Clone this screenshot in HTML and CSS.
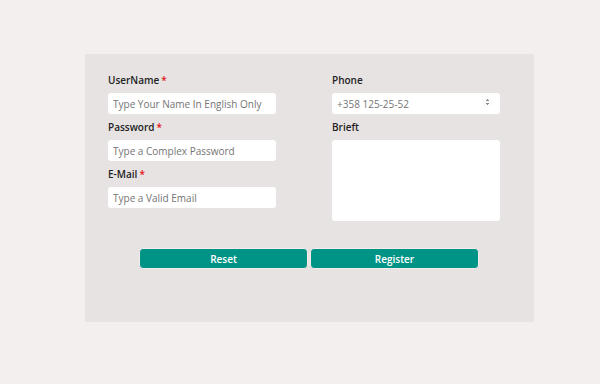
FILE: index.html
```html
<!DOCTYPE html>
<html lang="en">
<head>
    <meta charset="UTF-8">
    <meta name="viewport" content="width=device-width, initial-scale=1.0">
    <title>Register</title>
    <link rel="stylesheet" href="styles.css">
</head>
<body>

    <form class="register-panel" onsubmit="return false">
        <div class="form-grid">
            <div class="form-col">
                <div class="field">
                    <label for="username">UserName<span class="required">*</span></label>
                    <input type="text" id="username" placeholder="Type Your Name In English Only">
                </div>
                <div class="field">
                    <label for="password">Password<span class="required">*</span></label>
                    <input type="password" id="password" placeholder="Type a Complex Password">
                </div>
                <div class="field">
                    <label for="email">E-Mail<span class="required">*</span></label>
                    <input type="email" id="email" placeholder="Type a Valid Email">
                </div>
            </div>

            <div class="form-col">
                <div class="field">
                    <label for="phone">Phone</label>
                    <input type="number" id="phone" class="phone-input" placeholder="+358 125-25-52">
                </div>
                <div class="field">
                    <label for="brief">Brieft</label>
                    <textarea id="brief"></textarea>
                </div>
            </div>
        </div>

        <div class="form-actions">
            <button type="reset">Reset</button>
            <button type="submit">Register</button>
        </div>
    </form>

</body>
</html>
```

FILE: styles.css
```css
body {
    font-family: "Open Sans", Arial, sans-serif;
    background-color: #f3efee;
    margin: 0;
    padding: 54px 0 0 85px;
}

.register-panel {
    width: 449px;
    box-sizing: border-box;
    padding: 20px 23px 53px;
    background-color: #e7e3e2;
}

.form-grid {
    display: grid;
    grid-template-columns: 168px 168px;
    column-gap: 56px;
}

.field {
    margin-bottom: 7px;
}

.field label {
    display: block;
    font-size: 10px;
    line-height: 12px;
    font-weight: 600;
    color: #222;
    margin-bottom: 7px;
}

.required {
    color: #e3141b;
    margin-left: 2px;
}

.field input,
.field textarea {
    display: block;
    width: 168px;
    height: 21px;
    box-sizing: border-box;
    border: none;
    border-radius: 3px;
    background-color: #fff;
    padding: 0 5px;
    font-family: inherit;
    font-size: 10px;
    color: #333;
    outline: none;
}

.field textarea {
    height: 81px;
    resize: none;
}

.field input::placeholder {
    color: #757575;
}

.phone-input {
    padding-right: 6px;
}

.phone-input::-webkit-inner-spin-button {
    opacity: 1;
    height: 11px;
    width: 8px;
    transform: scale(0.7);
}

.form-actions {
    display: flex;
    gap: 2px;
    margin: 20px 0 0 31px;
}

button {
    width: 169px;
    height: 21px;
    padding: 0;
    font-family: inherit;
    font-size: 10px;
    font-weight: 600;
    color: #fff;
    background-color: #009486;
    border: 1px solid #f7ecec;
    border-radius: 4px;
    cursor: pointer;
}
```
